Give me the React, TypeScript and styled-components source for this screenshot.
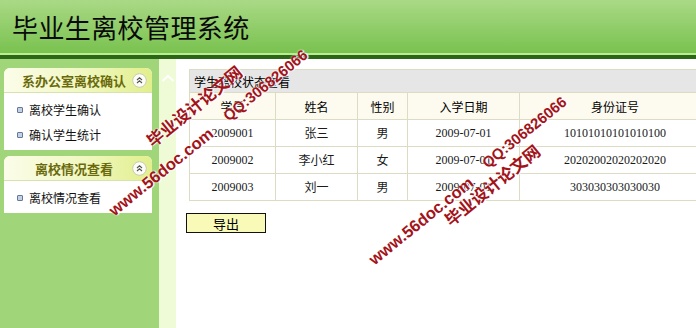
import React from "react";
import styled, { createGlobalStyle } from "styled-components";

const GlobalStyle = createGlobalStyle`
  html, body {
    margin: 0;
    padding: 0;
    overflow: hidden;
    background: #ffffff;
  }
  body {
    font-family: "Noto Sans CJK SC", "Liberation Sans", sans-serif;
    font-size: 12px;
    color: #000;
  }
`;

const Page = styled.div`
  position: relative;
  width: 696px;
  height: 328px;
  display: flex;
  flex-direction: column;
  overflow: hidden;
`;

const Header = styled.div`
  height: 53px;
  display: flex;
  align-items: center;
  padding-left: 12px;
  background: linear-gradient(#aad986, #79c24f);
  font-size: 26px;
  letter-spacing: 0.4px;
  color: #0a0a0a;
`;

const HeaderStripe = styled.div`
  height: 4px;
  border-top: 2px solid #b6ee90;
  background: #2b6716;
`;

const Body = styled.div`
  flex: 1;
  display: flex;
  min-height: 0;
`;

const Sidebar = styled.div`
  width: 148px;
  padding: 9px 7px 0 4px;
  background: #a0d57a;
  display: flex;
  flex-direction: column;
  gap: 6px;
`;

const Splitter = styled.div`
  width: 17px;
  background: #eefbd6;
  display: flex;
  justify-content: center;
  padding-top: 15px;
  box-sizing: border-box;
`;

const Main = styled.div`
  flex: 1;
  background: #fff;
  padding: 10px 0 0 13px;
  overflow: hidden;
`;

const Panel = styled.div`
  border-radius: 6px 6px 0 0;
  overflow: hidden;
  background: #fff;
`;

const PanelHead = styled.div`
  height: 25px;
  display: flex;
  align-items: center;
  position: relative;
  padding-left: 4px;
  padding-right: 12px;
  justify-content: center;
  background: linear-gradient(90deg, #fbfde9 0%, #f0f7c0 55%, #e2ef8c 100%);
  border-bottom: 1px solid #d6e3ae;
  box-sizing: border-box;
  font-weight: 700;
  font-size: 13px;
  color: #6a6a0c;
`;

const Toggle = styled.svg`
  position: absolute;
  right: 5px;
  top: 5px;
`;

const PanelBody = styled.ul`
  list-style: none;
  margin: 0;
  padding: 4px 0 3px;
`;

const MenuItem = styled.li`
  height: 25px;
  display: flex;
  align-items: center;
  padding-left: 13px;
  gap: 6px;
  font-size: 12px;
  color: #111;
`;

const Bullet = styled.span`
  width: 6px;
  height: 6px;
  border: 1px solid #66779a;
  border-radius: 1px;
  background: #c4d0e4;
  box-sizing: border-box;
`;

const Grid = styled.table`
  width: 521px;
  border-collapse: collapse;
  table-layout: fixed;
  font-family: "Liberation Serif", "Noto Sans CJK SC", serif;
  font-size: 12px;
`;

const TitleCell = styled.th`
  height: 22px;
  padding: 0 0 0 4px;
  text-align: left;
  font-weight: 400;
  font-family: "Noto Sans CJK SC", sans-serif;
  background: #e6e6e6;
  border: 1px solid #dcdcc4;
`;

const HeadCell = styled.th`
  height: 26px;
  padding: 0;
  font-weight: 400;
  font-family: "Noto Sans CJK SC", sans-serif;
  background: #fdfaf0;
  border: 1px solid #dcdcc4;
`;

const Cell = styled.td`
  height: 26px;
  padding: 0;
  text-align: center;
  border: 1px solid #dcdcc4;
  color: #1a1a1a;
`;

const ExportButton = styled.button`
  margin: 12px 0 0 -3px;
  width: 80px;
  height: 20px;
  padding: 0;
  border: 1px solid #111;
  background: #fafab8;
  font-family: "Noto Sans CJK SC", sans-serif;
  font-size: 13px;
  line-height: 1;
  color: #000;
`;

const Watermark = styled.span<{ $x: number; $y: number; $size: number }>`
  position: absolute;
  left: ${(p) => p.$x}px;
  top: ${(p) => p.$y - p.$size / 2}px;
  font-size: ${(p) => p.$size}px;
  line-height: 1;
  font-weight: 700;
  font-family: "Liberation Sans", "Noto Sans CJK SC", sans-serif;
  color: #a3131a;
  white-space: nowrap;
  transform: rotate(-39deg);
  transform-origin: 0 50%;
  text-shadow: 0 0 2px #fff, 1px 1px 1px #fff;
  pointer-events: none;
`;

function ToggleIcon() {
  return (
    <Toggle width="15" height="15" viewBox="0 0 15 15">
      <circle cx="7.5" cy="7.5" r="6.8" fill="#fdfdf8" stroke="#c9c9b4" />
      <path d="M5 7 L7.5 4.8 L10 7 M5 10 L7.5 7.8 L10 10" fill="none" stroke="#555" strokeWidth="1.1" />
    </Toggle>
  );
}

const columns = [
  { title: "学号", width: 86 },
  { title: "姓名", width: 82 },
  { title: "性别", width: 50 },
  { title: "入学日期", width: 112 },
  { title: "身份证号", width: 191 },
];

const students = [
  ["2009001", "张三", "男", "2009-07-01", "10101010101010100"],
  ["2009002", "李小红", "女", "2009-07-01", "20202002020202020"],
  ["2009003", "刘一", "男", "2009-07-01", "303030303030030"],
];

// watermark lines: x,y = left end of the text's centre line
const marks = [
  { text: "毕业设计论文网", x: 150, y: 144, size: 16.7 },
  { text: "QQ:306826066", x: 225, y: 117, size: 15 },
  { text: "www.56doc.com", x: 111, y: 212, size: 16.5 },
  { text: "www.56doc.com", x: 371, y: 261, size: 16.5 },
  { text: "QQ:306826066", x: 484, y: 164, size: 15 },
  { text: "毕业设计论文网", x: 448, y: 223, size: 16.7 },
];

export default function App() {
  return (
    <>
      <GlobalStyle />
      <Page>
        <Header>毕业生离校管理系统</Header>
        <HeaderStripe />
        <Body>
          <Sidebar>
            <Panel>
              <PanelHead>
                系办公室离校确认
                <ToggleIcon />
              </PanelHead>
              <PanelBody>
                <MenuItem>
                  <Bullet />
                  离校学生确认
                </MenuItem>
                <MenuItem>
                  <Bullet />
                  确认学生统计
                </MenuItem>
              </PanelBody>
            </Panel>
            <Panel>
              <PanelHead>
                离校情况查看
                <ToggleIcon />
              </PanelHead>
              <PanelBody>
                <MenuItem>
                  <Bullet />
                  离校情况查看
                </MenuItem>
              </PanelBody>
            </Panel>
          </Sidebar>
          <Splitter>
            <svg width="14" height="8" viewBox="0 0 14 8">
              <path d="M1.5 7 L7 1.8 L12.5 7" fill="none" stroke="#ffffff" strokeWidth="2" />
            </svg>
          </Splitter>
          <Main>
            <Grid>
              <colgroup>
                {columns.map((c) => (
                  <col key={c.title} style={{ width: c.width }} />
                ))}
              </colgroup>
              <thead>
                <tr>
                  <TitleCell colSpan={5}>学生离校状态查看</TitleCell>
                </tr>
                <tr>
                  {columns.map((c) => (
                    <HeadCell key={c.title}>{c.title}</HeadCell>
                  ))}
                </tr>
              </thead>
              <tbody>
                {students.map((row) => (
                  <tr key={row[0]}>
                    {row.map((v, i) => (
                      <Cell key={i}>{v}</Cell>
                    ))}
                  </tr>
                ))}
              </tbody>
            </Grid>
            <ExportButton>导出</ExportButton>
          </Main>
        </Body>
        {marks.map((m, i) => (
          <Watermark key={i} $x={m.x} $y={m.y} $size={m.size}>
            {m.text}
          </Watermark>
        ))}
      </Page>
    </>
  );
}
